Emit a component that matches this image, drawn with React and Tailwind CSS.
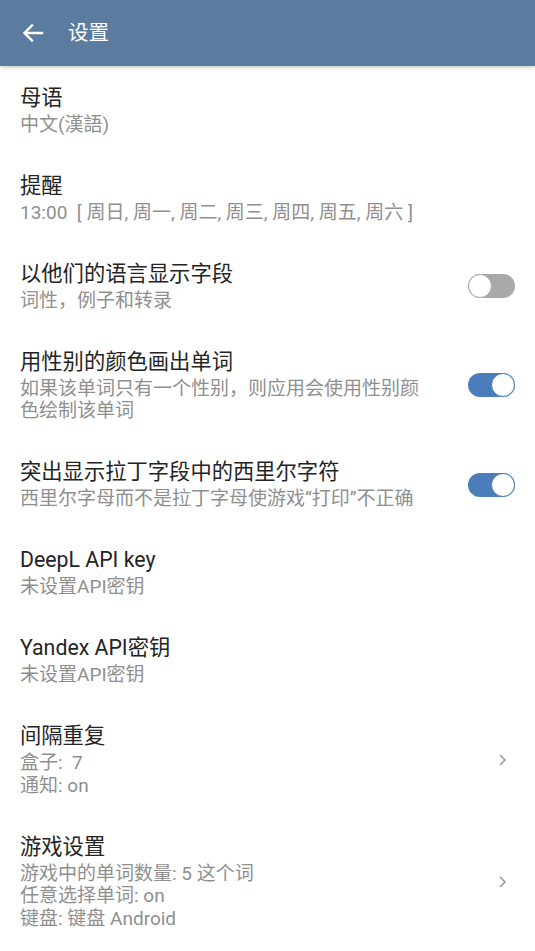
import React from "react";

const FONT = { fontFamily: "Roboto, 'Noto Sans CJK SC', 'Noto Sans', sans-serif" };

function Toggle({ on }) {
  return on ? (
    <div className="relative w-[47px] h-[24px] rounded-full bg-[#4a7db9]">
      <div className="absolute right-0 top-0 w-[24px] h-[24px] rounded-full bg-white border border-[#4a7db9]" />
    </div>
  ) : (
    <div className="relative w-[47px] h-[24px] rounded-full bg-[#a9a9a9]">
      <div className="absolute left-0 top-0 w-[24px] h-[24px] rounded-full bg-white border border-[#a9a9a9]" />
    </div>
  );
}

function Chevron() {
  return (
    <svg width="12" height="14" viewBox="0 0 12 14" className="mr-[6px]">
      <polyline points="3,2 8,7 3,12" fill="none" stroke="#9a9a9a" strokeWidth="1.6" />
    </svg>
  );
}

function Item({ title, lines, right }) {
  return (
    <div className="flex items-center px-[20px] py-[17.75px]">
      <div className="w-[408px]">
        <div className="text-[21.3px] leading-[28px] text-[#242424]">{title}</div>
        <div className="mt-[2px] text-[19px] leading-[22.5px] text-[#8f8f8f]">
          {lines.map((l, i) => (
            <div key={i} className="whitespace-pre-wrap">{l}</div>
          ))}
        </div>
      </div>
      <div className="flex-1 flex justify-end items-center">{right}</div>
    </div>
  );
}

export default function App() {
  return (
    <div className="w-[535px] min-h-[951px] bg-white overflow-hidden" style={FONT}>
      <div className="relative h-[66px] bg-[#5b7b9f] flex items-center shadow-[0_1px_4px_rgba(0,0,0,0.25)] z-10">
        <svg width="24" height="24" viewBox="0 0 24 24" className="ml-[21px]">
          <path d="M21 12H4M11 4.5L3.5 12L11 19.5" fill="none" stroke="#fff" strokeWidth="2.4" strokeLinecap="square" />
        </svg>
        <div className="ml-[23px] text-[20.5px] text-white">设置</div>
      </div>
      <div>
        <Item title="母语" lines={["中文(漢語)"]} />
        <Item title="提醒" lines={["13:00  [ 周日, 周一, 周二, 周三, 周四, 周五, 周六 ]"]} />
        <Item title="以他们的语言显示字段" lines={["词性，例子和转录"]} right={<Toggle on={false} />} />
        <Item
          title="用性别的颜色画出单词"
          lines={["如果该单词只有一个性别，则应用会使用性别颜色绘制该单词"]}
          right={<Toggle on />}
        />
        <Item
          title="突出显示拉丁字段中的西里尔字符"
          lines={["西里尔字母而不是拉丁字母使游戏“打印”不正确"]}
          right={<Toggle on />}
        />
        <Item title="DeepL API key" lines={["未设置API密钥"]} />
        <Item title="Yandex API密钥" lines={["未设置API密钥"]} />
        <Item title="间隔重复" lines={["盒子:  7", "通知: on"]} right={<Chevron />} />
        <Item
          title="游戏设置"
          lines={["游戏中的单词数量: 5 这个词", "任意选择单词: on", "键盘: 键盘 Android"]}
          right={<Chevron />}
        />
      </div>
    </div>
  );
}
